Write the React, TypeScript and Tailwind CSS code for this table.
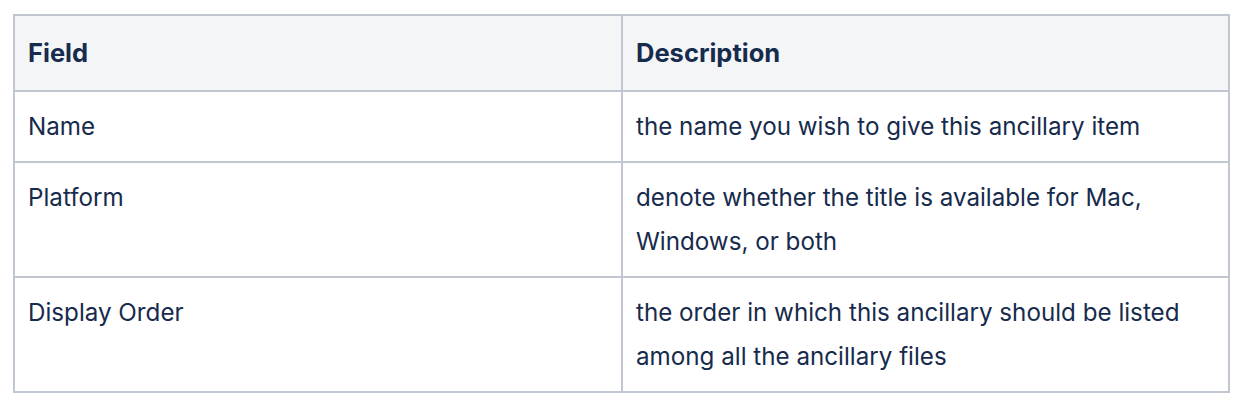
import React from "react";

const rows: [string, string][] = [
  ["Name", "the name you wish to give this ancillary item"],
  ["Platform", "denote whether the title is available for Mac, Windows, or both"],
  ["Display Order", "the order in which this ancillary should be listed among all the ancillary files"],
];

export default function App() {
  return (
    <div className="bg-white w-[1242px] h-[402px] pt-[14px] pl-[13px]" style={{ fontFamily: "Inter, 'Noto Sans', sans-serif" }}>
      <table className="border-collapse w-[1215px] text-[#172b4d] leading-[44px] table-fixed">
        <colgroup>
          <col className="w-[608px]" />
          <col className="w-[607px]" />
        </colgroup>
        <thead>
          <tr className="bg-[#f4f5f7]">
            <th className="border-2 border-[#c1c7d0] text-left font-bold text-[25.5px] px-[13px] py-[15px]">Field</th>
            <th className="border-2 border-[#c1c7d0] text-left font-bold text-[25.5px] px-[13px] py-[15px]">Description</th>
          </tr>
        </thead>
        <tbody>
          {rows.map(([a, b]) => (
            <tr key={a}>
              <td className="border-2 border-[#c1c7d0] align-top text-[24.2px] px-[13px] py-[12.5px]">{a}</td>
              <td className="border-2 border-[#c1c7d0] align-top text-[24.2px] px-[13px] py-[12.5px]">{b}</td>
            </tr>
          ))}
        </tbody>
      </table>
    </div>
  );
}
